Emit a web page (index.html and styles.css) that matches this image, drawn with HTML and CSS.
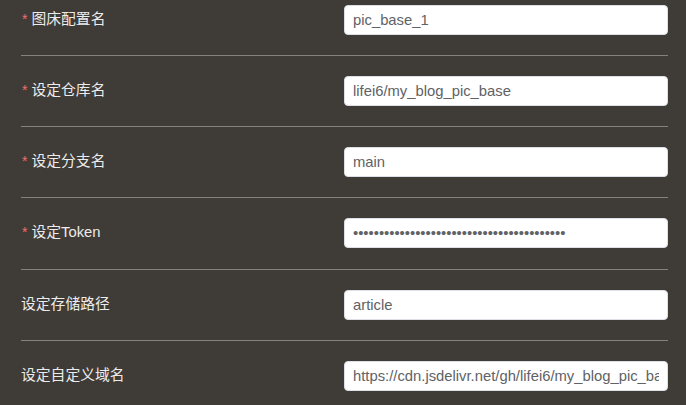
FILE: index.html
```html
<!DOCTYPE html>
<html lang="zh-CN">
<head>
<meta charset="utf-8">
<title>图床配置</title>
<link rel="stylesheet" href="styles.css">
</head>
<body>
<form class="form">
  <div class="row">
    <label class="label"><span class="req">*</span>图床配置名</label>
    <input class="input" type="text" value="pic_base_1">
  </div>
  <div class="row">
    <label class="label"><span class="req">*</span>设定仓库名</label>
    <input class="input" type="text" value="lifei6/my_blog_pic_base">
  </div>
  <div class="row">
    <label class="label"><span class="req">*</span>设定分支名</label>
    <input class="input" type="text" value="main">
  </div>
  <div class="row">
    <label class="label"><span class="req">*</span>设定Token</label>
    <input class="input" type="password" value="ghp_abcdefghijklmnopqrstuvwxyz0123456789A">
  </div>
  <div class="row">
    <label class="label">设定存储路径</label>
    <input class="input" type="text" value="article">
  </div>
  <div class="row">
    <label class="label">设定自定义域名</label>
    <input class="input" type="text" value="https://cdn.jsdelivr.net/gh/lifei6/my_blog_pic_base/">
  </div>
</form>
</body>
</html>
```
FILE: styles.css
```css
html, body {
  margin: 0;
  padding: 0;
  background: #3f3b36;
  overflow: hidden;
}
body {
  font-family: "Liberation Sans", "Noto Sans CJK SC", sans-serif;
}
.form {
  margin: -15px 18px 0 21px;
}
.row {
  display: flex;
  align-items: center;
  justify-content: space-between;
  padding: 20px 0;
  border-bottom: 1px solid #85817b;
}
.row:nth-child(4) {
  padding-bottom: 21px;
}
.label {
  color: #ececec;
  font-size: 14.8px;
  line-height: 20px;
  margin-top: -2px;
  display: flex;
  align-items: center;
}
.req {
  color: #f56c6c;
  margin-right: 4px;
  margin-left: 1px;
  font-size: 14px;
}
.input {
  box-sizing: border-box;
  width: 324px;
  height: 30px;
  border: 1px solid #dcdfe6;
  border-radius: 4px;
  background: #fff;
  color: #606266;
  font-family: "Liberation Sans", "Noto Sans CJK SC", sans-serif;
  font-size: 14.8px;
  padding: 0 8px;
  outline: none;
}
```
